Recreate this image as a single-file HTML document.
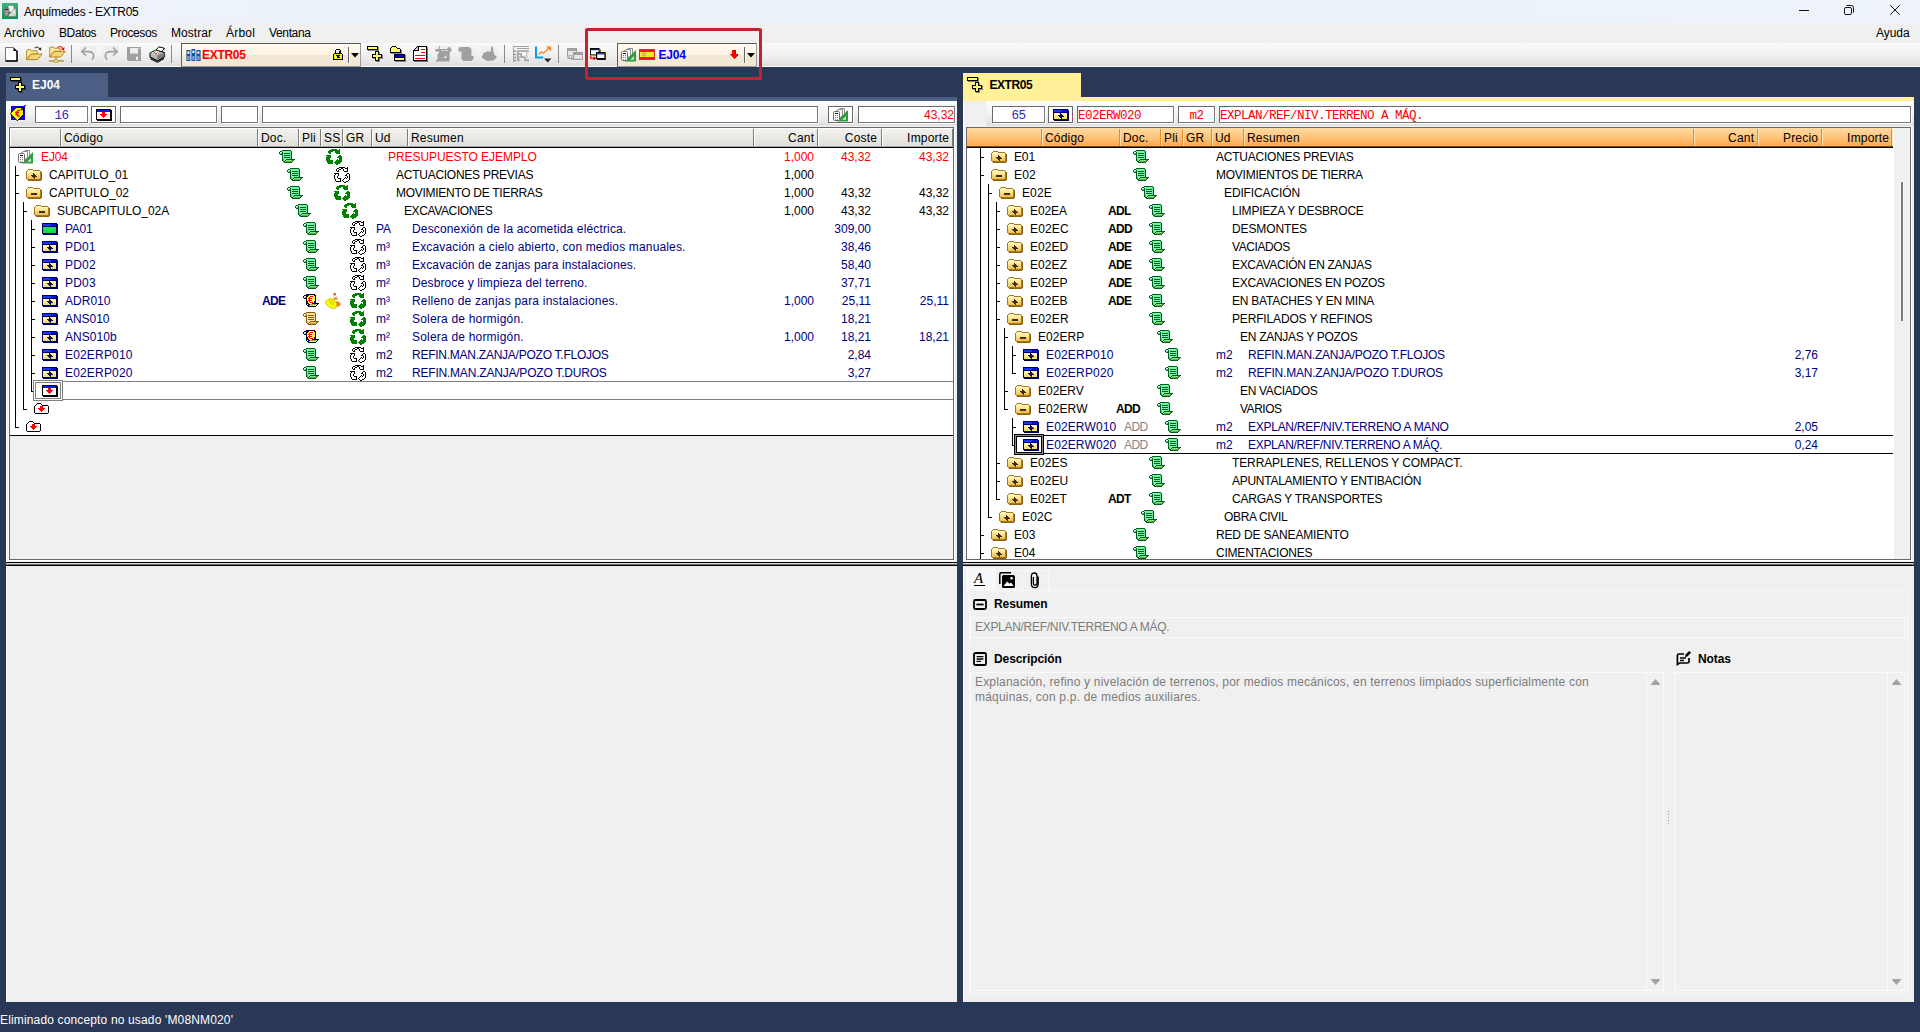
<!DOCTYPE html><html lang="es"><head><meta charset="utf-8"><title>Arquímedes - EXTR05</title><style>
*{margin:0;padding:0;box-sizing:border-box}
html,body{width:1920px;height:1032px;overflow:hidden;background:#2a3857}
body{position:relative;font-family:"Liberation Sans",Arial,sans-serif;font-size:12px;color:#000}
div,span,svg.ic{position:absolute}
svg.ic{display:block;overflow:visible}
.t{white-space:nowrap;line-height:18px;height:18px;font-size:12px}
.b{font-weight:bold}

.red{color:#ff0000}.nv{color:#000080}.gy{color:#858585}
.mono{font-family:"Liberation Mono","DejaVu Sans Mono",monospace;font-size:12.6px;letter-spacing:-0.56px;margin-top:1px}
.inp{background:#fff;border:1px solid #6a6a6a;border-right-color:#7a7a7a;border-bottom-color:#7a7a7a;box-shadow:1px 1px 0 #fdfdfd}
.btn{background:#fff;border:1px solid #6a6a6a;box-shadow:1px 1px 0 #fdfdfd}
.hl{background:linear-gradient(#f2f1ed,#e9e8e3 55%,#dfded8)}
.hr{background:linear-gradient(#ffdca4,#ffc57c 50%,#ffa850)}
.sepl{width:1px;background:#7b7b7b;box-shadow:1px 0 0 #fff}
.sepr{width:1px;background:#e08c30;box-shadow:1px 0 0 #ffe2b4}
.vl{width:1px;background:#000}
.hlin{height:1px;background:#000}
.tsep{width:1px;background:#8a8a8a}
.combo{border:1px solid #5c5c5c;border-right-color:#9a9a9a;border-bottom-color:#9a9a9a;background:linear-gradient(#fffaf0,#fdf3e3 50%,#f2e6d2 52%,#f3e9d8)}
</style></head><body><svg width="0" height="0" style="position:absolute"><defs><symbol id="scg" viewBox="0 0 16 13" shape-rendering="crispEdges"><path fill="#005a22" d="M3 0h9v1h-9zM1 1h2v1h-2zM12 1h1v1h-1zM0 2h1v1h-1zM3 2h1v1h-1zM12 2h1v1h-1zM0 3h1v1h-1zM3 3h1v1h-1zM5 3h6v1h-6zM12 3h1v1h-1zM1 4h3v1h-3zM12 4h1v1h-1zM3 5h1v1h-1zM5 5h6v1h-6zM12 5h1v1h-1zM3 6h1v1h-1zM12 6h1v1h-1zM3 7h1v1h-1zM5 7h6v1h-6zM12 7h1v1h-1zM3 8h1v1h-1zM12 8h1v1h-1zM3 9h1v1h-1zM7 9h9v1h-9zM3 10h1v1h-1zM6 10h1v1h-1zM14 10h1v1h-1zM4 11h2v1h-2zM13 11h1v1h-1zM5 12h8v1h-8z"/><path fill="#74f8a0" d="M3 1h8v1h-8zM4 2h7v1h-7zM1 3h1v1h-1zM4 3h1v1h-1zM4 4h7v1h-7zM4 5h1v1h-1zM4 6h7v1h-7zM4 7h1v1h-1zM4 8h7v1h-7zM5 9h2v1h-2zM5 10h1v1h-1z"/><path fill="#58e888" d="M11 1h1v1h-1zM11 2h1v1h-1zM11 3h1v1h-1zM11 4h1v1h-1zM11 5h1v1h-1zM11 6h1v1h-1zM11 7h1v1h-1zM11 8h1v1h-1z"/><path fill="#d0ffe4" d="M1 2h2v1h-2z"/><path fill="#34c468" d="M2 3h1v1h-1zM4 9h1v1h-1zM4 10h1v1h-1z"/><path fill="#94dc80" d="M7 10h6v1h-6zM6 11h1v1h-1z"/><path fill="#58b444" d="M13 10h1v1h-1zM7 11h6v1h-6z"/></symbol><symbol id="sct" viewBox="0 0 16 13" shape-rendering="crispEdges"><path fill="#8a5a0c" d="M3 0h9v1h-9zM1 1h2v1h-2zM12 1h1v1h-1zM0 2h1v1h-1zM3 2h1v1h-1zM12 2h1v1h-1zM0 3h1v1h-1zM3 3h1v1h-1zM5 3h6v1h-6zM12 3h1v1h-1zM1 4h3v1h-3zM12 4h1v1h-1zM3 5h1v1h-1zM5 5h6v1h-6zM12 5h1v1h-1zM3 6h1v1h-1zM12 6h1v1h-1zM3 7h1v1h-1zM5 7h6v1h-6zM12 7h1v1h-1zM3 8h1v1h-1zM12 8h1v1h-1zM3 9h1v1h-1zM7 9h9v1h-9zM3 10h1v1h-1zM6 10h1v1h-1zM14 10h1v1h-1zM4 11h2v1h-2zM13 11h1v1h-1zM5 12h8v1h-8z"/><path fill="#fbe7a4" d="M3 1h8v1h-8zM4 2h7v1h-7zM1 3h1v1h-1zM4 3h1v1h-1zM4 4h7v1h-7zM4 5h1v1h-1zM4 6h7v1h-7zM4 7h1v1h-1zM4 8h7v1h-7zM5 9h2v1h-2zM5 10h1v1h-1z"/><path fill="#f0d585" d="M11 1h1v1h-1zM11 2h1v1h-1zM11 3h1v1h-1zM11 4h1v1h-1zM11 5h1v1h-1zM11 6h1v1h-1zM11 7h1v1h-1zM11 8h1v1h-1z"/><path fill="#fff8d8" d="M1 2h2v1h-2z"/><path fill="#e0bc60" d="M2 3h1v1h-1zM4 9h1v1h-1zM4 10h1v1h-1z"/><path fill="#e8cc78" d="M7 10h6v1h-6zM6 11h1v1h-1z"/><path fill="#c8a048" d="M13 10h1v1h-1zM7 11h6v1h-6z"/></symbol><symbol id="sce" viewBox="0 0 16 13" shape-rendering="crispEdges"><path fill="#000000" d="M3 0h9v1h-9zM1 1h2v1h-2zM12 1h1v1h-1zM0 2h1v1h-1zM3 2h1v1h-1zM12 2h1v1h-1zM0 3h1v1h-1zM3 3h1v1h-1zM12 3h1v1h-1zM1 4h3v1h-3zM12 4h1v1h-1zM3 5h1v1h-1zM12 5h1v1h-1zM3 6h1v1h-1zM12 6h1v1h-1zM3 7h1v1h-1zM12 7h1v1h-1zM3 8h1v1h-1zM12 8h1v1h-1zM3 9h1v1h-1zM9 9h7v1h-7zM3 10h1v1h-1zM6 10h1v1h-1zM14 10h1v1h-1zM4 11h2v1h-2zM13 11h1v1h-1zM5 12h8v1h-8z"/><path fill="#0000c8" d="M3 1h3v1h-3zM11 1h1v1h-1zM4 2h1v1h-1zM4 7h1v1h-1zM11 7h1v1h-1zM4 8h1v1h-1zM11 8h1v1h-1zM4 9h2v1h-2zM5 10h1v1h-1z"/><path fill="#ffff40" d="M6 1h5v1h-5zM5 2h2v1h-2zM10 2h2v1h-2zM4 3h2v1h-2zM7 3h5v1h-5zM4 4h1v1h-1zM9 4h3v1h-3zM4 5h2v1h-2zM7 5h5v1h-5zM4 6h1v1h-1zM9 6h3v1h-3zM5 7h1v1h-1zM7 7h4v1h-4zM5 8h2v1h-2zM10 8h1v1h-1zM6 9h3v1h-3z"/><path fill="#e0e0e0" d="M1 2h2v1h-2zM1 3h1v1h-1zM4 10h1v1h-1z"/><path fill="#ff0000" d="M7 2h3v1h-3zM6 3h1v1h-1zM5 4h4v1h-4zM6 5h1v1h-1zM5 6h4v1h-4zM6 7h1v1h-1zM7 8h3v1h-3z"/><path fill="#a0a0a0" d="M2 3h1v1h-1z"/><path fill="#b8b020" d="M7 10h6v1h-6zM6 11h1v1h-1z"/><path fill="#d8d8c0" d="M13 10h1v1h-1zM7 11h6v1h-6z"/></symbol><symbol id="rcg" viewBox="0 0 16 16" shape-rendering="crispEdges"><path fill="#008000" d="M5 0h6v1h-6zM13 0h1v1h-1zM3 1h11v1h-11zM2 2h5v1h-5zM9 2h5v1h-5zM2 3h3v1h-3zM9 3h5v1h-5zM3 4h2v1h-2zM10 4h4v1h-4zM0 6h5v1h-5zM13 6h2v1h-2zM1 7h4v1h-4zM12 7h4v1h-4zM0 8h5v1h-5zM11 8h5v1h-5zM0 9h4v1h-4zM13 9h3v1h-3zM0 10h4v1h-4zM11 10h1v1h-1zM13 10h3v1h-3zM0 11h7v1h-7zM10 11h6v1h-6zM1 12h6v1h-6zM9 12h7v1h-7zM1 13h6v1h-6zM8 13h7v1h-7zM2 14h5v1h-5zM9 14h5v1h-5zM10 15h2v1h-2z"/></symbol><symbol id="rco" viewBox="0 0 16 16" shape-rendering="crispEdges"><path fill="#000000" d="M5 0h6v1h-6zM13 0h1v1h-1zM3 1h2v1h-2zM7 1h2v1h-2zM11 1h3v1h-3zM2 2h1v1h-1zM5 2h2v1h-2zM9 2h1v1h-1zM13 2h1v1h-1zM2 3h1v1h-1zM4 3h1v1h-1zM9 3h1v1h-1zM13 3h1v1h-1zM3 4h2v1h-2zM10 4h4v1h-4zM0 6h5v1h-5zM13 6h2v1h-2zM1 7h1v1h-1zM4 7h1v1h-1zM12 7h1v1h-1zM15 7h1v1h-1zM0 8h1v1h-1zM4 8h1v1h-1zM11 8h2v1h-2zM15 8h1v1h-1zM0 9h1v1h-1zM3 9h1v1h-1zM13 9h1v1h-1zM15 9h1v1h-1zM0 10h1v1h-1zM3 10h1v1h-1zM11 10h1v1h-1zM13 10h1v1h-1zM15 10h1v1h-1zM0 11h1v1h-1zM4 11h3v1h-3zM10 11h1v1h-1zM12 11h1v1h-1zM15 11h1v1h-1zM1 12h1v1h-1zM6 12h1v1h-1zM9 12h1v1h-1zM15 12h1v1h-1zM1 13h1v1h-1zM6 13h1v1h-1zM8 13h1v1h-1zM14 13h1v1h-1zM2 14h5v1h-5zM9 14h1v1h-1zM12 14h2v1h-2zM10 15h2v1h-2z"/><path fill="#ffffff" d="M5 1h2v1h-2zM9 1h2v1h-2zM3 2h2v1h-2zM10 2h3v1h-3zM3 3h1v1h-1zM10 3h3v1h-3zM2 7h2v1h-2zM13 7h2v1h-2zM1 8h3v1h-3zM13 8h2v1h-2zM1 9h2v1h-2zM14 9h1v1h-1zM1 10h2v1h-2zM14 10h1v1h-1zM1 11h3v1h-3zM11 11h1v1h-1zM13 11h2v1h-2zM2 12h4v1h-4zM10 12h5v1h-5zM2 13h4v1h-4zM9 13h5v1h-5zM10 14h2v1h-2z"/></symbol><symbol id="fplus" viewBox="0 0 16 12" shape-rendering="crispEdges"><path fill="#a87818" d="M2 0h5v1h-5zM1 1h1v1h-1zM7 1h7v1h-7zM0 2h1v1h-1zM14 2h1v1h-1zM0 3h1v1h-1zM14 3h1v1h-1zM0 4h1v1h-1zM14 4h1v1h-1zM0 5h1v1h-1zM14 5h1v1h-1zM0 6h1v1h-1zM14 6h1v1h-1zM0 7h1v1h-1zM14 7h1v1h-1zM0 8h1v1h-1zM14 8h1v1h-1zM0 9h1v1h-1zM14 9h1v1h-1zM1 10h14v1h-14z"/><path fill="#fff6c0" d="M2 1h5v1h-5zM1 2h13v1h-13z"/><path fill="#fdeca0" d="M1 3h13v1h-13zM1 4h6v1h-6zM8 4h6v1h-6z"/><path fill="#8c600c" d="M15 3h1v1h-1zM15 4h1v1h-1zM15 5h1v1h-1zM15 6h1v1h-1zM15 7h1v1h-1zM15 8h1v1h-1zM15 9h1v1h-1zM15 10h1v1h-1zM2 11h13v1h-13z"/><path fill="#4a2c04" d="M7 4h1v1h-1zM7 5h2v1h-2zM5 6h5v1h-5zM6 7h5v1h-5zM7 8h2v1h-2zM8 9h1v1h-1z"/><path fill="#f7de88" d="M1 5h6v1h-6zM9 5h5v1h-5zM1 6h4v1h-4zM10 6h4v1h-4z"/><path fill="#efcf6c" d="M1 7h5v1h-5zM11 7h3v1h-3zM1 8h6v1h-6zM9 8h5v1h-5z"/><path fill="#e6c058" d="M1 9h7v1h-7zM9 9h5v1h-5z"/></symbol><symbol id="fminus" viewBox="0 0 16 12" shape-rendering="crispEdges"><path fill="#a87818" d="M2 0h5v1h-5zM1 1h1v1h-1zM7 1h7v1h-7zM0 2h1v1h-1zM14 2h1v1h-1zM0 3h1v1h-1zM14 3h1v1h-1zM0 4h1v1h-1zM14 4h1v1h-1zM0 5h1v1h-1zM14 5h1v1h-1zM0 6h1v1h-1zM14 6h1v1h-1zM0 7h1v1h-1zM14 7h1v1h-1zM0 8h1v1h-1zM14 8h1v1h-1zM0 9h1v1h-1zM14 9h1v1h-1zM1 10h14v1h-14z"/><path fill="#fff6c0" d="M2 1h5v1h-5zM1 2h13v1h-13z"/><path fill="#fdeca0" d="M1 3h13v1h-13zM1 4h13v1h-13z"/><path fill="#8c600c" d="M15 3h1v1h-1zM15 4h1v1h-1zM15 5h1v1h-1zM15 6h1v1h-1zM15 7h1v1h-1zM15 8h1v1h-1zM15 9h1v1h-1zM15 10h1v1h-1zM2 11h13v1h-13z"/><path fill="#f7de88" d="M1 5h13v1h-13zM1 6h4v1h-4zM11 6h3v1h-3z"/><path fill="#4a2c04" d="M5 6h6v1h-6zM5 7h6v1h-6z"/><path fill="#efcf6c" d="M1 7h4v1h-4zM11 7h3v1h-3zM1 8h13v1h-13z"/><path fill="#e6c058" d="M1 9h13v1h-13z"/></symbol><symbol id="item" viewBox="0 0 16 12" shape-rendering="crispEdges"><path fill="#000064" d="M0 0h15v1h-15zM0 1h1v1h-1zM14 1h2v1h-2zM0 2h1v1h-1zM14 2h2v1h-2zM0 3h16v1h-16zM0 4h1v1h-1zM14 4h2v1h-2zM0 5h1v1h-1zM14 5h2v1h-2zM0 6h1v1h-1zM14 6h2v1h-2zM0 7h1v1h-1zM14 7h2v1h-2zM0 8h1v1h-1zM14 8h2v1h-2zM0 9h1v1h-1zM14 9h2v1h-2zM0 10h16v1h-16zM1 11h15v1h-15z"/><path fill="#1838ff" d="M1 1h8v1h-8zM1 2h8v1h-8z"/><path fill="#0010f0" d="M9 1h5v1h-5zM9 2h5v1h-5z"/><path fill="#fff2a8" d="M1 4h6v1h-6zM8 4h6v1h-6zM1 5h6v1h-6zM9 5h5v1h-5z"/><path fill="#101048" d="M7 4h1v1h-1zM7 5h2v1h-2zM5 6h5v1h-5zM6 7h5v1h-5zM7 8h2v1h-2zM8 9h1v1h-1z"/><path fill="#fde78c" d="M1 6h4v1h-4zM10 6h4v1h-4zM1 7h5v1h-5zM11 7h3v1h-3z"/><path fill="#f6da74" d="M1 8h6v1h-6zM9 8h5v1h-5zM1 9h7v1h-7zM9 9h5v1h-5z"/></symbol><symbol id="itemg" viewBox="0 0 16 12" shape-rendering="crispEdges"><path fill="#000064" d="M0 0h15v1h-15zM0 1h1v1h-1zM14 1h2v1h-2zM0 2h1v1h-1zM14 2h2v1h-2zM0 3h16v1h-16zM0 4h1v1h-1zM14 4h2v1h-2zM0 5h1v1h-1zM14 5h2v1h-2zM0 6h1v1h-1zM14 6h2v1h-2zM0 7h1v1h-1zM14 7h2v1h-2zM0 8h1v1h-1zM14 8h2v1h-2zM0 9h1v1h-1zM14 9h2v1h-2zM0 10h16v1h-16zM1 11h15v1h-15z"/><path fill="#1838ff" d="M1 1h8v1h-8zM1 2h8v1h-8z"/><path fill="#0010f0" d="M9 1h5v1h-5zM9 2h5v1h-5z"/><path fill="#18e458" d="M1 4h13v1h-13zM1 5h13v1h-13zM5 6h5v1h-5zM6 7h5v1h-5zM7 8h2v1h-2zM8 9h1v1h-1z"/><path fill="#10e050" d="M1 6h4v1h-4zM10 6h4v1h-4zM1 7h5v1h-5zM11 7h3v1h-3z"/><path fill="#08dc48" d="M1 8h6v1h-6zM9 8h5v1h-5zM1 9h7v1h-7zM9 9h5v1h-5z"/></symbol><symbol id="newitem" viewBox="0 0 16 12" shape-rendering="crispEdges"><path fill="#000000" d="M0 0h15v1h-15zM0 1h1v1h-1zM14 1h2v1h-2zM0 2h1v1h-1zM14 2h2v1h-2zM0 3h1v1h-1zM14 3h2v1h-2zM0 4h1v1h-1zM14 4h2v1h-2zM0 5h1v1h-1zM14 5h2v1h-2zM0 6h1v1h-1zM14 6h2v1h-2zM0 7h1v1h-1zM14 7h2v1h-2zM0 8h1v1h-1zM14 8h2v1h-2zM0 9h1v1h-1zM14 9h2v1h-2zM0 10h16v1h-16zM1 11h15v1h-15z"/><path fill="#0020f0" d="M1 1h13v1h-13zM1 2h13v1h-13z"/><path fill="#ffffff" d="M1 3h5v1h-5zM9 3h5v1h-5zM1 4h5v1h-5zM9 4h5v1h-5zM1 5h3v1h-3zM11 5h3v1h-3zM1 6h4v1h-4zM10 6h4v1h-4zM1 7h5v1h-5zM9 7h5v1h-5zM1 8h6v1h-6zM8 8h6v1h-6zM1 9h13v1h-13z"/><path fill="#ff0000" d="M6 3h3v1h-3zM6 4h3v1h-3zM4 5h7v1h-7zM5 6h5v1h-5zM6 7h3v1h-3zM7 8h1v1h-1z"/></symbol><symbol id="newfolder" viewBox="0 0 15 11" shape-rendering="crispEdges"><path fill="#000000" d="M3 0h4v1h-4zM2 1h1v1h-1zM7 1h1v1h-1zM1 2h1v1h-1zM8 2h6v1h-6zM0 3h1v1h-1zM14 3h1v1h-1zM0 4h1v1h-1zM14 4h1v1h-1zM0 5h1v1h-1zM14 5h1v1h-1zM0 6h1v1h-1zM14 6h1v1h-1zM0 7h1v1h-1zM14 7h1v1h-1zM0 8h1v1h-1zM14 8h1v1h-1zM0 9h1v1h-1zM14 9h1v1h-1zM1 10h13v1h-13z"/><path fill="#ffffff" d="M3 1h4v1h-4zM2 2h6v1h-6zM1 3h5v1h-5zM9 3h5v1h-5zM1 4h5v1h-5zM9 4h5v1h-5zM1 5h3v1h-3zM11 5h3v1h-3zM1 6h4v1h-4zM10 6h4v1h-4zM1 7h5v1h-5zM9 7h5v1h-5zM1 8h6v1h-6zM8 8h6v1h-6zM1 9h13v1h-13z"/><path fill="#ff0000" d="M6 3h3v1h-3zM6 4h3v1h-3zM4 5h7v1h-7zM5 6h5v1h-5zM6 7h3v1h-3zM7 8h1v1h-1z"/></symbol><symbol id="budget" viewBox="0 0 16 14"><path d="M5.5 3.5 L5.5 1.5 L8 .5 L11.5 .5 L11.5 8" fill="#fff" stroke="#8a8a8a"/><path d="M3.5 4 L3.5 2.5 L6 1.5 L9.5 1.5 L9.5 9 L3.5 9Z" fill="#fff" stroke="#8a8a8a"/><polygon points="15,2 15,13.5 3.5,13.5" fill="#2e9c3c"/><polygon points="13,8 13,11.7 9.2,11.7" fill="#cfe8d0"/><rect x=".5" y="3.5" width="6" height="9" rx="1" fill="#fff" stroke="#6e6e6e"/><rect x="2" y="5" width="3" height="1" fill="#111"/><rect x="2" y="7" width="1" height="1" fill="#777"/><rect x="4" y="7" width="1" height="1" fill="#777"/><rect x="2" y="9" width="1" height="1" fill="#777"/><rect x="4" y="9" width="1" height="1" fill="#777"/><rect x="2" y="11" width="1" height="1" fill="#999"/><rect x="4" y="11" width="1" height="1" fill="#999"/></symbol><symbol id="hat" viewBox="0 0 16 16"><path d="M8.6 .2 H10.4 L14.2 9.8 L16 11 L13 13.9 L9 10 Z" fill="#ff7208"/><path d="M8.6 .2 H10.4 L10.8 1.4 H8.6Z" fill="#a84808"/><path d="M8.7 2.6 H11.4 L12.1 4.4 H8.8Z M8.9 6.6 H13 L13.8 8.6 H9Z" fill="#fff"/><path d="M.4 10.8 C.4 7 4 4.8 7.6 6 C10.6 7 12 10 11.8 12.6 L10.8 15 C8 16.6 4 14.4 .4 10.8Z" fill="#ffff00" stroke="#b0b000" stroke-width=".7"/><path d="M3.4 7.2 C5.2 8 6.2 9.6 6.4 11.8 M6 6.2 C7.6 7.2 8.8 9.4 8.8 12.8" stroke="#b8b800" stroke-width=".9" fill="none"/></symbol><symbol id="tbtree" viewBox="0 0 16 16" shape-rendering="crispEdges"><path fill="#000000" d="M0 0h11v1h-11zM0 1h1v1h-1zM10 1h1v1h-1zM0 2h1v1h-1zM10 2h1v1h-1zM0 3h11v1h-11zM8 5h4v1h-4zM8 6h1v1h-1zM11 6h1v1h-1zM8 7h1v1h-1zM11 7h1v1h-1zM5 8h4v1h-4zM11 8h4v1h-4zM5 9h1v1h-1zM14 9h1v1h-1zM5 10h1v1h-1zM14 10h1v1h-1zM5 11h4v1h-4zM11 11h4v1h-4zM8 12h1v1h-1zM11 12h1v1h-1zM8 13h1v1h-1zM11 13h1v1h-1zM8 14h4v1h-4z"/><path fill="#ffff60" d="M1 1h9v1h-9zM1 2h9v1h-9zM9 6h2v1h-2zM9 7h2v1h-2zM9 8h2v1h-2zM6 9h8v1h-8zM6 10h8v1h-8zM9 11h2v1h-2zM9 12h2v1h-2zM9 13h2v1h-2z"/><path fill="#00000070" d="M11 1h1v1h-1zM11 2h1v1h-1zM11 3h1v1h-1zM1 4h11v1h-11zM12 6h1v1h-1zM12 7h1v1h-1zM15 9h1v1h-1zM15 10h1v1h-1zM15 11h1v1h-1zM6 12h2v1h-2zM12 12h4v1h-4zM12 13h1v1h-1zM12 14h1v1h-1zM9 15h4v1h-4z"/></symbol><symbol id="tbfold" viewBox="0 0 16 16" shape-rendering="crispEdges"><path fill="#000000" d="M2 0h4v1h-4zM1 1h1v1h-1zM6 1h1v1h-1zM0 2h1v1h-1zM7 2h3v1h-3zM0 3h1v1h-1zM10 3h1v1h-1zM0 4h1v1h-1zM10 4h1v1h-1zM0 5h1v1h-1zM10 5h1v1h-1zM0 6h11v1h-11zM4 8h11v1h-11zM4 9h1v1h-1zM14 9h1v1h-1zM4 10h1v1h-1zM14 10h1v1h-1zM4 11h11v1h-11zM4 12h1v1h-1zM14 12h1v1h-1zM4 13h1v1h-1zM14 13h1v1h-1zM4 14h11v1h-11z"/><path fill="#ffff60" d="M2 1h4v1h-4zM1 2h6v1h-6zM1 3h9v1h-9zM1 4h9v1h-9zM1 5h9v1h-9zM5 12h9v1h-9zM5 13h9v1h-9z"/><path fill="#00000070" d="M11 4h1v1h-1zM11 5h1v1h-1zM11 6h1v1h-1zM1 7h11v1h-11zM15 9h1v1h-1zM15 10h1v1h-1zM15 11h1v1h-1zM15 12h1v1h-1zM15 13h1v1h-1zM15 14h1v1h-1zM5 15h11v1h-11z"/><path fill="#0000f0" d="M5 9h9v1h-9zM5 10h9v1h-9z"/></symbol><symbol id="tbdoc" viewBox="0 0 16 16" shape-rendering="crispEdges"><path fill="#000000" d="M4 0h10v1h-10zM3 1h1v1h-1zM5 1h1v1h-1zM13 1h1v1h-1zM2 2h1v1h-1zM5 2h1v1h-1zM13 2h1v1h-1zM1 3h1v1h-1zM5 3h1v1h-1zM13 3h1v1h-1zM0 4h6v1h-6zM13 4h1v1h-1zM0 5h1v1h-1zM13 5h1v1h-1zM0 6h1v1h-1zM13 6h1v1h-1zM0 7h1v1h-1zM13 7h1v1h-1zM0 8h1v1h-1zM13 8h1v1h-1zM0 9h1v1h-1zM13 9h1v1h-1zM0 10h1v1h-1zM13 10h1v1h-1zM0 11h1v1h-1zM13 11h1v1h-1zM0 12h1v1h-1zM13 12h1v1h-1zM0 13h1v1h-1zM13 13h1v1h-1zM0 14h14v1h-14z"/><path fill="#c8c8c8" d="M4 1h1v1h-1zM3 2h2v1h-2zM2 3h3v1h-3z"/><path fill="#ffffff" d="M6 1h7v1h-7zM6 2h7v1h-7zM6 3h2v1h-2zM12 3h1v1h-1zM6 4h7v1h-7zM1 5h12v1h-12zM1 6h7v1h-7zM12 6h1v1h-1zM1 7h12v1h-12zM1 8h12v1h-12zM1 9h1v1h-1zM12 9h1v1h-1zM1 10h12v1h-12zM1 11h12v1h-12zM1 12h1v1h-1zM12 12h1v1h-1zM1 13h12v1h-12z"/><path fill="#00000080" d="M14 1h1v1h-1zM14 2h1v1h-1zM14 3h1v1h-1zM14 4h1v1h-1zM14 5h1v1h-1zM14 6h1v1h-1zM14 7h1v1h-1zM14 8h1v1h-1zM14 9h1v1h-1zM14 10h1v1h-1zM14 11h1v1h-1zM14 12h1v1h-1zM14 13h1v1h-1zM14 14h1v1h-1zM1 15h14v1h-14z"/><path fill="#ff0000" d="M8 3h4v1h-4zM8 6h4v1h-4zM2 9h10v1h-10zM2 12h10v1h-10z"/></symbol><symbol id="tbnew" viewBox="0 0 13 15"><path d="M.5 .5 H8.5 L12 4 V14 H.5Z" fill="#fff" stroke="#777"/><path d="M8.5 .5 L12 4 H8.5Z" fill="#000"/><path d="M12 3.5 V14 H.5" fill="none" stroke="#000" stroke-width="1.4"/></symbol><symbol id="tbopen" viewBox="0 0 17 15"><path d="M.7 4.5 Q.7 3.6 1.6 3.6 H4.4 L5.4 4.8 H10.4 Q11.2 4.8 11.2 5.6 V8 H5 L.7 13.5Z" fill="#fbe9a6" stroke="#b07c10" stroke-width=".9"/><path d="M.8 13.6 L5.2 8 H16.2 L11.6 13.6Z" fill="#f5d676" stroke="#b07c10" stroke-width=".9"/><path d="M8.6 2 Q11.2 -.4 13.8 2.6" fill="none" stroke="#3a2606" stroke-width="1"/><path d="M12.2 3.6 L15.2 1.2 L15.2 4.4Z" fill="#3a2606"/></symbol><symbol id="tbnet" viewBox="0 0 17 17"><g transform="translate(0,-2.6)"><path d="M.7 4.5 Q.7 3.6 1.6 3.6 H4.4 L5.4 4.8 H10.4 Q11.2 4.8 11.2 5.6 V8 H5 L.7 13.5Z" fill="#fbe9a6" stroke="#b07c10" stroke-width=".9"/><path d="M.8 13.6 L5.2 8 H16.2 L11.6 13.6Z" fill="#f5d676" stroke="#b07c10" stroke-width=".9"/></g><path d="M8.4 1.6 Q11.4 -.8 13.6 2.2" fill="none" stroke="#ff2020" stroke-width="1.1"/><path d="M11.8 3 L15.6 1.2 L15 4.8Z" fill="#ff0000"/><path d="M7 11 V14" stroke="#b07c10" stroke-width="1"/><path d="M0 15 H15" stroke="#a87410" stroke-width="1.1"/><rect x="5.2" y="13.6" width="3.6" height="2.8" rx=".8" fill="#e8f0a0" stroke="#a09010" stroke-width=".8"/></symbol><symbol id="tbundo" viewBox="0 0 16 16"><rect width="16" height="16" fill="#ececec" opacity=".7"/><path d="M6 .6 L.6 5.6 L6 10.6 L6 8.4 L2.8 5.6 L6 2.8Z" fill="#a0a0a0"/><path d="M2.4 5.6 H9 Q14 6 13.6 10.6 Q13.4 12.8 11.6 13.8" fill="none" stroke="#a0a0a0" stroke-width="1.6"/></symbol><symbol id="tbredo" viewBox="0 0 16 16"><rect width="16" height="16" fill="#ececec" opacity=".7"/><g transform="translate(16,0) scale(-1,1)"><path d="M6 .6 L.6 5.6 L6 10.6 L6 8.4 L2.8 5.6 L6 2.8Z" fill="#a0a0a0"/><path d="M2.4 5.6 H9 Q14 6 13.6 10.6 Q13.4 12.8 11.6 13.8" fill="none" stroke="#a0a0a0" stroke-width="1.6"/></g></symbol><symbol id="tbsave" viewBox="0 0 14 14"><path d="M0 0 H14 V14 H1.4 L0 12.6Z" fill="#a0a0a0"/><rect x="3" y="1" width="8" height="5.6" fill="#eee"/><rect x="9" y="9.6" width="2" height="3.4" fill="#eee"/><rect x="12.2" y="1" width="1" height="1" fill="#eee"/></symbol><symbol id="tbprint" viewBox="0 0 17 17"><path d="M6.6 4.4 L10 .8 L15.6 2.4 L12 6.4Z" fill="#fff" stroke="#000" stroke-width="1"/><path d="M1 7 L7 4 L15.6 6.6 L15.6 10.6 L8.6 14.8 L1 11Z" fill="#b8b8b8" stroke="#000" stroke-width="1"/><path d="M8 9.4 L15.4 6.8 V10.6 L8.4 14.6Z" fill="#7c7c7c"/><path d="M1.4 7.2 L7 4.4 L10 5.4 L8 9.2 Z" fill="#e0e0e0"/><path d="M1 11.4 L8.6 15.2 L15.6 11 M1.6 13 L8.6 16.4 L15 12.6" fill="none" stroke="#000" stroke-width="1"/><rect x="4" y="6.2" width="2" height="1.2" fill="#10d020"/><rect x="6.2" y="7.2" width="2" height="1.2" fill="#ff1010"/></symbol><symbol id="tbg1" viewBox="0 0 17 16"><rect width="17" height="16" fill="#ececec" opacity=".6"/><path d="M4 0 H5 V3 H12 L14.4 .6 L16.4 3 V5.4 H14.8 L14.6 15.6 H.4 L3.4 11.4 H2.4 V8.6 L4 7 V5.4 H.4 V3 H4Z" fill="#a0a0a0"/><path d="M11.4 9 V12 H8.6Z" fill="#ececec"/><rect x="6.6" y="4" width="2" height=".9" fill="#ececec"/><rect x="10" y="4" width="2.6" height=".9" fill="#ececec"/></symbol><symbol id="tbg2" viewBox="0 0 17 16"><rect width="17" height="16" fill="#ececec" opacity=".6"/><path d="M2 1 H11 L13.4 3 V10 H15.6 V12.6 L13.6 15 H5.4 L3.4 13 V5.4 H.4 V2.6Z" fill="#a0a0a0"/></symbol><symbol id="tbg3" viewBox="0 0 17 16"><rect width="17" height="16" fill="#ececec" opacity=".6"/><path d="M10.6 .4 H11.6 L12 3 L13.4 9 L16 10.6 L13 14.6 L6 15 L.6 11.4 L2.6 7 L6 5.4 H10 L9.8 2Z" fill="#a0a0a0"/></symbol><symbol id="tbgtree" viewBox="0 0 16 16"><g fill="none" stroke="#a0a0a0"><path d="M.5 16 V.5 H16" stroke-width="1"/><path d="M4 2.5 H16" stroke-width="1"/><path d="M5 15 V5 H16 M5.5 8 H9 M8 8 V11 H12 M12 11 V14.4 H16" stroke-width="1.6"/></g><g fill="#a0a0a0"><rect x="1" y="4.4" width="2.4" height="1.6"/><rect x="1" y="7.6" width="2.4" height="1.6"/><rect x="1" y="10.8" width="2.4" height="1.6"/><rect x="1" y="13.8" width="2.4" height="1.6"/></g><path d="M13 6 L14.5 7.5 L13 9 L14.5 10.5 L13 12 M5.6 10 L7 11.4 L5.6 12.8 L7 14.2 L5.6 15.6" fill="none" stroke="#a0a0a0" stroke-width=".8"/></symbol><symbol id="tbchart" viewBox="0 0 17 17"><path d="M1 .4 V11.4 H8.2" fill="none" stroke="#0c9ce8" stroke-width="2"/><path d="M3.6 8.4 L6.4 5.8 L8.2 7.2 L14 2" fill="none" stroke="#ff8224" stroke-width="1.3"/><path d="M11 .4 H16.2 V5.6Z" fill="#ff8224"/><path d="M9 12.6 H16.4 L12.7 16.6Z" fill="#2a2a2a"/></symbol><symbol id="tbgwin" viewBox="0 0 16 12"><rect width="16" height="12" fill="#ececec" opacity=".6"/><rect x=".5" y=".5" width="9" height="7.4" fill="#e6e6e6" stroke="#a0a0a0"/><rect x=".5" y=".5" width="9" height="2.4" fill="#a0a0a0"/><rect x="6.6" y="4.6" width="9" height="6.8" fill="#e6e6e6" stroke="#a0a0a0" stroke-width="1.2"/><rect x="6.6" y="4.6" width="9" height="2.4" fill="#a0a0a0"/><path d="M1 8.4 V10.4 H5.2 M4 9 L5.6 10.4 L4 11.8" fill="none" stroke="#a0a0a0" stroke-width="1.1"/></symbol><symbol id="tbwin" viewBox="0 0 16 12"><rect x=".5" y=".5" width="8.6" height="6.4" fill="#fff" stroke="#000"/><rect x="1" y="1" width="7.6" height="1.2" fill="#0000f0"/><rect x="9.6" y="1.6" width="1" height="6" fill="#000"/><rect x="6.6" y="4.6" width="8.4" height="6" fill="#fff" stroke="#000" stroke-width="1.2"/><rect x="7.2" y="5.2" width="7.2" height="1.2" fill="#0000f0"/><path d="M7 11.4 H16 V5.6" stroke="#000" stroke-width="1" fill="none"/><path d="M.8 8 V10.4 H4.6 M3.6 8.8 L5.4 10.4 L3.8 12" fill="none" stroke="#f00000" stroke-width="1.2"/></symbol><symbol id="books" viewBox="0 0 15 12"><rect x="-.5" y="-.5" width="16" height="13" fill="#fff" opacity=".85"/><g fill="#1450a8"><rect x=".4" y="1" width="4" height="11"/><rect x="5.4" y="0" width="4" height="12"/><rect x="10.4" y="1" width="4.2" height="11"/></g><g fill="#fff"><rect x="1.4" y="2.4" width="2" height="2.4"/><rect x="6.4" y="1.6" width="2" height="2.4"/><rect x="11.4" y="2.4" width="2" height="2.4"/><rect x="1.2" y="7.6" width="2.4" height=".9"/><rect x="6.2" y="7.6" width="2.4" height=".9"/><rect x="11.2" y="7.6" width="2.4" height=".9"/><rect x="1.2" y="9.6" width="2.4" height=".9"/><rect x="6.2" y="9.6" width="2.4" height=".9"/><rect x="11.2" y="9.6" width="2.4" height=".9"/></g></symbol><symbol id="lock" viewBox="0 0 10 11" shape-rendering="crispEdges"><path fill="#000000" d="M3 0h4v1h-4zM2 1h1v1h-1zM7 1h1v1h-1zM2 2h1v1h-1zM6 2h2v1h-2zM2 3h1v1h-1zM6 3h2v1h-2zM1 4h8v1h-8zM0 5h1v1h-1zM9 5h1v1h-1zM0 6h1v1h-1zM3 6h4v1h-4zM9 6h1v1h-1zM0 7h1v1h-1zM4 7h2v1h-2zM9 7h1v1h-1zM0 8h1v1h-1zM4 8h3v1h-3zM9 8h1v1h-1zM0 9h1v1h-1zM9 9h1v1h-1zM0 10h10v1h-10z"/><path fill="#e8e8e8" d="M3 1h4v1h-4zM3 2h1v1h-1zM3 3h1v1h-1zM2 7h2v1h-2zM2 8h1v1h-1z"/><path fill="#f4f000" d="M1 5h8v1h-8zM1 6h2v1h-2zM7 6h2v1h-2zM1 7h1v1h-1zM6 7h3v1h-3zM1 8h1v1h-1zM3 8h1v1h-1zM7 8h2v1h-2zM1 9h8v1h-8z"/></symbol><symbol id="flag" viewBox="0 0 16 11"><rect width="16" height="11" fill="#f01818"/><rect x="1" y="3" width="14" height="5" fill="#f8ec20"/><rect x="0" y="0" width="16" height="11" fill="none" stroke="#ff2a2a" stroke-width="1"/><circle cx="5" cy="5.5" r="1.5" fill="#e8e0d0" stroke="#e04020" stroke-width=".6"/></symbol><symbol id="redarr" viewBox="0 0 9 9" shape-rendering="crispEdges"><path fill="#ff0000" d="M2 0h3v1h-3zM2 1h3v1h-3zM2 2h3v1h-3zM2 3h3v1h-3zM0 4h7v1h-7zM1 5h6v1h-6zM2 6h4v1h-4zM3 7h2v1h-2z"/><path fill="#a00000" d="M5 0h1v1h-1zM5 1h1v1h-1zM5 2h1v1h-1zM5 3h1v1h-1zM7 4h1v1h-1zM7 5h1v1h-1zM6 6h1v1h-1zM5 7h1v1h-1zM4 8h1v1h-1z"/></symbol><symbol id="eurotag" viewBox="0 0 16 17"><rect x=".5" y=".5" width="15" height="15" fill="#fff" opacity=".9"/><rect x="1" y="1" width="14" height="14" fill="#1400e6"/><path d="M.2 8.6 L6.1 2.5 H13.5 V9.4 L7.3 15.8Z" fill="#ffff00" stroke="#000" stroke-width="1"/><path d="M10.6 2.4 H13.9 V6.4Z" fill="#000"/><circle cx="11.4" cy="4.7" r=".9" fill="#000" stroke="#f0a020" stroke-width=".5"/><path d="M13.4 2.4 L14.6 .6 L15.9 .3" fill="none" stroke="#000" stroke-width="1"/><path d="M9.8 5.5 Q6.8 4.9 6.8 8.4 Q6.8 11.8 9.8 11.3" fill="none" stroke="#ff0000" stroke-width="1.3"/><path d="M5 7.4 H9 M5 9.3 H8.6" stroke="#ff0000" stroke-width="1.1"/></symbol></defs></svg><div style="left:0px;top:0px;width:1920px;height:23px;background:linear-gradient(90deg,#eef3f9,#e9f3f8 40%,#eef4f9)"></div>
<svg class="ic" style="left:2px;top:3px" width="16" height="16" viewBox="0 0 16 16"><defs><linearGradient id="ag" x1="0" y1="0" x2="0" y2="1"><stop offset="0" stop-color="#3db47a"/><stop offset="1" stop-color="#089a50"/></linearGradient></defs><rect width="16" height="16" rx=".6" fill="url(#ag)"/><path d="M6 3 L8 2.4 H11 L12 4 V9 H6Z" fill="#f4f4f4" stroke="#777" stroke-width=".6"/><path d="M14 4.6 V13.6 H5Z" fill="#e9e6e6" stroke="#555" stroke-width=".5"/><path d="M12.6 8 V12.4 H8.4Z" fill="#fff"/><rect x="2.2" y="5" width="4.6" height="8" rx=".6" fill="#9a9a9a" stroke="#555" stroke-width=".6"/><rect x="3" y="6" width="3" height="1" fill="#222"/><circle cx="11.4" cy="10.6" r=".5" fill="#444"/><circle cx="10" cy="12" r=".5" fill="#444"/><circle cx="12.2" cy="12" r=".5" fill="#444"/></svg>
<span class="t" id="f1" style="left:24px;top:3px;letter-spacing:-0.336px;">Arquímedes - EXTR05</span>
<svg class="ic" style="left:1790px;top:0" width="130" height="23" viewBox="0 0 130 23" fill="none" stroke="#111" stroke-width="1"><path d="M9 10.5 H19"/><rect x="54.5" y="7.5" width="7" height="7" rx="1.4"/><path d="M56.5 5.5 H61.2 Q63.5 5.5 63.5 7.8 V12.5"/><path d="M100.3 5.3 L109.7 14.7 M109.7 5.3 L100.3 14.7"/></svg>
<div style="left:0px;top:23px;width:1920px;height:20px;background:#f0f0f0"></div>
<span class="t" id="f2" style="left:4px;top:24px;letter-spacing:0.09px;">Archivo</span>
<span class="t" id="f3" style="left:59px;top:24px;letter-spacing:-0.384px;">BDatos</span>
<span class="t" id="f4" style="left:110px;top:24px;letter-spacing:-0.404px;">Procesos</span>
<span class="t" id="f5" style="left:171px;top:24px;letter-spacing:0.05px;">Mostrar</span>
<span class="t" id="f6" style="left:226px;top:24px;letter-spacing:0.219px;">Árbol</span>
<span class="t" id="f7" style="left:269px;top:24px;letter-spacing:-0.353px;">Ventana</span>
<span class="t" id="f8" style="left:1876px;top:24px;letter-spacing:-0.047px;">Ayuda</span>
<div style="left:0px;top:43px;width:1920px;height:24px;background:linear-gradient(#f9f9f9,#f3f3f3 40%,#e6e5e5 80%,#dddbdb 95.8%,#fbfbfb 95.9%)"></div>
<svg class="ic" style="left:5px;top:47px" width="13" height="15"><use href="#tbnew"/></svg>
<svg class="ic" style="left:26px;top:46px" width="17" height="15"><use href="#tbopen"/></svg>
<svg class="ic" style="left:49px;top:46px" width="17" height="17"><use href="#tbnet"/></svg>
<svg class="ic" style="left:80px;top:46px" width="16" height="16"><use href="#tbundo"/></svg>
<svg class="ic" style="left:103px;top:46px" width="16" height="16"><use href="#tbredo"/></svg>
<svg class="ic" style="left:127px;top:47px" width="14" height="14"><use href="#tbsave"/></svg>
<svg class="ic" style="left:149px;top:46px" width="17" height="17"><use href="#tbprint"/></svg>
<svg class="ic" style="left:367px;top:46px" width="16" height="16"><use href="#tbtree"/></svg>
<svg class="ic" style="left:390px;top:46px" width="16" height="16"><use href="#tbfold"/></svg>
<svg class="ic" style="left:413px;top:46px" width="16" height="16"><use href="#tbdoc"/></svg>
<svg class="ic" style="left:435px;top:46px" width="17" height="16"><use href="#tbg1"/></svg>
<svg class="ic" style="left:458px;top:46px" width="17" height="16"><use href="#tbg2"/></svg>
<svg class="ic" style="left:481px;top:46px" width="17" height="16"><use href="#tbg3"/></svg>
<svg class="ic" style="left:513px;top:46px" width="16" height="16"><use href="#tbgtree"/></svg>
<svg class="ic" style="left:535px;top:46px" width="17" height="17"><use href="#tbchart"/></svg>
<svg class="ic" style="left:567px;top:48px" width="16" height="12"><use href="#tbgwin"/></svg>
<svg class="ic" style="left:590px;top:48px" width="16" height="12"><use href="#tbwin"/></svg>
<div class="tsep" style="left:71px;top:45px;width:1px;height:18px;"></div>
<div class="tsep" style="left:171px;top:45px;width:1px;height:18px;"></div>
<div class="tsep" style="left:504px;top:45px;width:1px;height:18px;"></div>
<div class="tsep" style="left:558px;top:45px;width:1px;height:18px;"></div>
<div class="combo" style="left:181px;top:43px;width:180px;height:24px;"></div>
<svg class="ic" style="left:186px;top:49px" width="15" height="12"><use href="#books"/></svg>
<span class="t b red" id="f9" style="left:202px;top:46px;letter-spacing:-0.284px;">EXTR05</span>
<svg class="ic" style="left:333px;top:49px" width="10" height="11"><use href="#lock"/></svg>
<div style="left:348px;top:47px;width:1px;height:16px;background:#666;box-shadow:1px 0 0 #fff"></div>
<svg class="ic" style="left:351px;top:53px" width="8" height="5" viewBox="0 0 8 5"><path d="M0 0 H8 L4 4.6Z" fill="#000"/></svg>
<div class="combo" style="left:617px;top:43px;width:140px;height:24px;"></div>
<svg class="ic" style="left:621px;top:48px" width="16" height="14"><use href="#budget"/></svg>
<svg class="ic" style="left:639px;top:49px" width="16" height="11"><use href="#flag"/></svg>
<span class="t b" id="f10" style="left:658.5px;top:46px;color:#0000ff;letter-spacing:-0.237px;">EJ04</span>
<svg class="ic" style="left:730px;top:50px" width="9" height="9"><use href="#redarr"/></svg>
<div style="left:744px;top:47px;width:1px;height:16px;background:#666;box-shadow:1px 0 0 #fff"></div>
<svg class="ic" style="left:747px;top:53px" width="8" height="5" viewBox="0 0 8 5"><path d="M0 0 H8 L4 4.6Z" fill="#000"/></svg>
<div style="left:6px;top:73px;width:102px;height:24px;background:#4b5f84"></div>
<div style="left:6px;top:97px;width:951px;height:4px;background:#4b5f84"></div>
<svg class="ic" style="left:10px;top:77px" width="16" height="16"><use href="#tbtree"/></svg>
<span class="t b" id="f11" style="left:32px;top:76px;color:#fff;letter-spacing:-0.009px;">EJ04</span>
<div style="left:963px;top:73px;width:118px;height:24px;background:#fff099"></div>
<div style="left:963px;top:97px;width:951px;height:4px;background:#fff099"></div>
<svg class="ic" style="left:967px;top:77px" width="16" height="16"><use href="#tbtree"/></svg>
<span class="t b" id="f12" style="left:989.4px;top:76px;letter-spacing:-0.411px;">EXTR05</span>
<div style="left:6px;top:101px;width:951px;height:461px;background:#f0f0f0"></div>
<div style="left:7px;top:101px;width:950px;height:25px;background:linear-gradient(#fbfbfb,#f5f5f5 45%,#e6e6e6 85%,#dfdfdf 92%,#e4e4e4)"></div>
<div style="left:6px;top:101px;width:1px;height:461px;background:#fff"></div>
<div style="left:9px;top:127px;width:945px;height:433px;border:1px solid #696969;background:#f0f0f0;box-shadow:-1px 0 0 0 #fafafa,1px 1px 0 0 #fff"></div>
<div style="left:963px;top:101px;width:951px;height:461px;background:#f0f0f0"></div>
<div style="left:986px;top:101px;width:928px;height:25px;background:linear-gradient(#fbfbfb,#f5f5f5 45%,#e6e6e6 85%,#dfdfdf 92%,#e4e4e4)"></div>
<div style="left:963px;top:101px;width:1px;height:461px;background:#fff"></div>
<div style="left:966px;top:127px;width:945px;height:433px;border:1px solid #696969;background:#f0f0f0;box-shadow:-1px 0 0 0 #fafafa,1px 1px 0 0 #fff"></div>
<svg class="ic" style="left:10px;top:105px" width="16" height="17"><use href="#eurotag"/></svg>
<div class="inp" style="left:35px;top:106px;width:53px;height:17px;"></div>
<span class="t mono" style="left:35px;top:106px;width:53px;text-align:center;color:#2a2ad0">16</span>
<div class="btn" style="left:91px;top:106px;width:25px;height:17px;"></div>
<svg class="ic" style="left:96px;top:109px" width="16" height="12"><use href="#newitem"/></svg>
<div class="inp" style="left:120px;top:106px;width:97px;height:17px;"></div>
<div class="inp" style="left:221px;top:106px;width:37px;height:17px;"></div>
<div class="inp" style="left:262px;top:106px;width:556px;height:17px;"></div>
<div class="btn" style="left:828px;top:106px;width:25px;height:17px;"></div>
<svg class="ic" style="left:833px;top:108px" width="16" height="14"><use href="#budget"/></svg>
<div class="inp" style="left:858px;top:106px;width:97px;height:17px;"></div>
<span class="t red" style="right:966px;top:106px;">43,32</span>
<div class="inp" style="left:992px;top:106px;width:53px;height:17px;"></div>
<span class="t mono" style="left:992px;top:106px;width:53px;text-align:center;color:#2a2ad0">65</span>
<div class="btn" style="left:1048px;top:106px;width:25px;height:17px;"></div>
<svg class="ic" style="left:1053px;top:109px" width="16" height="12"><use href="#item"/></svg>
<div class="inp" style="left:1077px;top:106px;width:97px;height:17px;"></div>
<span class="t mono red" style="left:1078px;top:106px">E02ERW020</span>
<div class="inp" style="left:1178px;top:106px;width:37px;height:17px;"></div>
<span class="t mono red" style="left:1178px;top:106px;width:37px;text-align:center">m2</span>
<div class="inp" style="left:1219px;top:106px;width:692px;height:17px;"></div>
<span class="t mono red" style="left:1220px;top:106px">EXPLAN/REF/NIV.TERRENO A MÁQ.</span>
<div style="left:10px;top:128px;width:943px;height:307px;background:#fff"></div>
<div class="hl" style="left:11px;top:129px;width:942px;height:17px;"></div>
<div style="left:10px;top:146px;width:943px;height:1px;background:#a6a6a6"></div>
<div style="left:10px;top:147px;width:943px;height:1px;background:#000"></div>
<div style="left:10px;top:435px;width:943px;height:1px;background:#000"></div>
<div class="sepl" style="left:60px;top:129px;width:1px;height:17px;"></div>
<div class="sepl" style="left:257px;top:129px;width:1px;height:17px;"></div>
<div class="sepl" style="left:298px;top:129px;width:1px;height:17px;"></div>
<div class="sepl" style="left:320px;top:129px;width:1px;height:17px;"></div>
<div class="sepl" style="left:342px;top:129px;width:1px;height:17px;"></div>
<div class="sepl" style="left:371px;top:129px;width:1px;height:17px;"></div>
<div class="sepl" style="left:407px;top:129px;width:1px;height:17px;"></div>
<div class="sepl" style="left:753px;top:129px;width:1px;height:17px;"></div>
<div class="sepl" style="left:817px;top:129px;width:1px;height:17px;"></div>
<div class="sepl" style="left:881px;top:129px;width:1px;height:17px;"></div>
<div style="left:952px;top:129px;width:1px;height:17px;background:#7b7b7b"></div>
<span class="t" style="left:64px;top:129px;letter-spacing:.2px;">Código</span>
<span class="t" style="left:261px;top:129px;letter-spacing:.2px;">Doc.</span>
<span class="t" style="left:302px;top:129px;letter-spacing:.2px;">Pli</span>
<span class="t" style="left:324px;top:129px;letter-spacing:.2px;">SS</span>
<span class="t" style="left:346px;top:129px;letter-spacing:.2px;">GR</span>
<span class="t" style="left:375px;top:129px;letter-spacing:.2px;">Ud</span>
<span class="t" style="left:411px;top:129px;letter-spacing:.2px;">Resumen</span>
<span class="t" style="right:1106px;top:129px;letter-spacing:.2px;margin-right:-.2px;">Cant</span>
<span class="t" style="right:1043px;top:129px;letter-spacing:.2px;margin-right:-.2px;">Coste</span>
<span class="t" style="right:971px;top:129px;letter-spacing:.2px;margin-right:-.2px;">Importe</span>
<svg class="ic" style="left:18px;top:150px" width="16" height="14"><use href="#budget"/></svg>
<span class="t red" id="f13" style="left:41px;top:148px;letter-spacing:-0.103px;">EJ04</span>
<svg class="ic" style="left:279px;top:150px" width="16" height="13"><use href="#scg"/></svg>
<svg class="ic" style="left:326px;top:149px" width="16" height="16"><use href="#rcg"/></svg>
<span class="t red" id="f14" style="left:388px;top:148px;letter-spacing:-0.058px;">PRESUPUESTO EJEMPLO</span>
<span class="t red" style="right:1106px;top:148px;">1,000</span>
<span class="t red" style="right:1049px;top:148px;">43,32</span>
<span class="t red" style="right:971px;top:148px;">43,32</span>
<svg class="ic" style="left:26px;top:169px" width="16" height="12"><use href="#fplus"/></svg>
<span class="t" id="f15" style="left:49px;top:166px;letter-spacing:-0.076px;">CAPITULO_01</span>
<svg class="ic" style="left:287px;top:168px" width="16" height="13"><use href="#scg"/></svg>
<svg class="ic" style="left:334px;top:167px" width="16" height="16"><use href="#rco"/></svg>
<span class="t" id="f16" style="left:396px;top:166px;letter-spacing:-0.258px;">ACTUACIONES PREVIAS</span>
<span class="t" style="right:1106px;top:166px;">1,000</span>
<svg class="ic" style="left:26px;top:187px" width="16" height="12"><use href="#fminus"/></svg>
<span class="t" id="f17" style="left:49px;top:184px;letter-spacing:-0.004px;">CAPITULO_02</span>
<svg class="ic" style="left:287px;top:186px" width="16" height="13"><use href="#scg"/></svg>
<svg class="ic" style="left:334px;top:185px" width="16" height="16"><use href="#rcg"/></svg>
<span class="t" id="f18" style="left:396px;top:184px;letter-spacing:-0.28px;">MOVIMIENTO DE TIERRAS</span>
<span class="t" style="right:1106px;top:184px;">1,000</span>
<span class="t" style="right:1049px;top:184px;">43,32</span>
<span class="t" style="right:971px;top:184px;">43,32</span>
<svg class="ic" style="left:34px;top:205px" width="16" height="12"><use href="#fminus"/></svg>
<span class="t" id="f19" style="left:57px;top:202px;letter-spacing:-0.032px;">SUBCAPITULO_02A</span>
<svg class="ic" style="left:295px;top:204px" width="16" height="13"><use href="#scg"/></svg>
<svg class="ic" style="left:342px;top:203px" width="16" height="16"><use href="#rcg"/></svg>
<span class="t" id="f20" style="left:404px;top:202px;letter-spacing:-0.385px;">EXCAVACIONES</span>
<span class="t" style="right:1106px;top:202px;">1,000</span>
<span class="t" style="right:1049px;top:202px;">43,32</span>
<span class="t" style="right:971px;top:202px;">43,32</span>
<svg class="ic" style="left:42px;top:223px" width="16" height="12"><use href="#itemg"/></svg>
<span class="t nv" id="f21" style="left:65px;top:220px;letter-spacing:-0.277px;">PA01</span>
<svg class="ic" style="left:303px;top:222px" width="16" height="13"><use href="#scg"/></svg>
<svg class="ic" style="left:350px;top:221px" width="16" height="16"><use href="#rco"/></svg>
<span class="t nv" style="left:376px;top:220px;">PA</span>
<span class="t nv" id="f22" style="left:412px;top:220px;letter-spacing:0.146px;">Desconexión de la acometida eléctrica.</span>
<span class="t nv" style="right:1049px;top:220px;">309,00</span>
<svg class="ic" style="left:42px;top:241px" width="16" height="12"><use href="#item"/></svg>
<span class="t nv" id="f23" style="left:65px;top:238px;letter-spacing:0.134px;">PD01</span>
<svg class="ic" style="left:303px;top:240px" width="16" height="13"><use href="#scg"/></svg>
<svg class="ic" style="left:350px;top:239px" width="16" height="16"><use href="#rco"/></svg>
<span class="t nv" style="left:376px;top:238px;">m³</span>
<span class="t nv" id="f24" style="left:412px;top:238px;letter-spacing:0.155px;">Excavación a cielo abierto, con medios manuales.</span>
<span class="t nv" style="right:1049px;top:238px;">38,46</span>
<svg class="ic" style="left:42px;top:259px" width="16" height="12"><use href="#item"/></svg>
<span class="t nv" id="f25" style="left:65px;top:256px;letter-spacing:0.205px;">PD02</span>
<svg class="ic" style="left:303px;top:258px" width="16" height="13"><use href="#scg"/></svg>
<svg class="ic" style="left:350px;top:257px" width="16" height="16"><use href="#rco"/></svg>
<span class="t nv" style="left:376px;top:256px;">m³</span>
<span class="t nv" id="f26" style="left:412px;top:256px;letter-spacing:0.121px;">Excavación de zanjas para instalaciones.</span>
<span class="t nv" style="right:1049px;top:256px;">58,40</span>
<svg class="ic" style="left:42px;top:277px" width="16" height="12"><use href="#item"/></svg>
<span class="t nv" id="f27" style="left:65px;top:274px;letter-spacing:0.205px;">PD03</span>
<svg class="ic" style="left:303px;top:276px" width="16" height="13"><use href="#scg"/></svg>
<svg class="ic" style="left:350px;top:275px" width="16" height="16"><use href="#rco"/></svg>
<span class="t nv" style="left:376px;top:274px;">m²</span>
<span class="t nv" id="f28" style="left:412px;top:274px;letter-spacing:0.109px;">Desbroce y limpieza del terreno.</span>
<span class="t nv" style="right:1049px;top:274px;">37,71</span>
<svg class="ic" style="left:42px;top:295px" width="16" height="12"><use href="#item"/></svg>
<span class="t nv" id="f29" style="left:65px;top:292px;letter-spacing:0.026px;">ADR010</span>
<span class="t b nv" style="left:262px;top:292px;letter-spacing:-0.7px;">ADE</span>
<svg class="ic" style="left:303px;top:294px" width="16" height="13"><use href="#sce"/></svg>
<svg class="ic" style="left:325px;top:293px" width="16" height="16"><use href="#hat"/></svg>
<svg class="ic" style="left:350px;top:293px" width="16" height="16"><use href="#rcg"/></svg>
<span class="t nv" style="left:376px;top:292px;">m³</span>
<span class="t nv" id="f30" style="left:412px;top:292px;letter-spacing:0.204px;">Relleno de zanjas para instalaciones.</span>
<span class="t nv" style="right:1106px;top:292px;">1,000</span>
<span class="t nv" style="right:1049px;top:292px;">25,11</span>
<span class="t nv" style="right:971px;top:292px;">25,11</span>
<svg class="ic" style="left:42px;top:313px" width="16" height="12"><use href="#item"/></svg>
<span class="t nv" id="f31" style="left:65px;top:310px;letter-spacing:-0.037px;">ANS010</span>
<svg class="ic" style="left:303px;top:312px" width="16" height="13"><use href="#sct"/></svg>
<svg class="ic" style="left:350px;top:311px" width="16" height="16"><use href="#rcg"/></svg>
<span class="t nv" style="left:376px;top:310px;">m²</span>
<span class="t nv" id="f32" style="left:412px;top:310px;letter-spacing:0.198px;">Solera de hormigón.</span>
<span class="t nv" style="right:1049px;top:310px;">18,21</span>
<svg class="ic" style="left:42px;top:331px" width="16" height="12"><use href="#item"/></svg>
<span class="t nv" id="f33" style="left:65px;top:328px;letter-spacing:0.058px;">ANS010b</span>
<svg class="ic" style="left:303px;top:330px" width="16" height="13"><use href="#sce"/></svg>
<svg class="ic" style="left:350px;top:329px" width="16" height="16"><use href="#rcg"/></svg>
<span class="t nv" style="left:376px;top:328px;">m²</span>
<span class="t nv" id="f34" style="left:412px;top:328px;letter-spacing:0.198px;">Solera de hormigón.</span>
<span class="t nv" style="right:1106px;top:328px;">1,000</span>
<span class="t nv" style="right:1049px;top:328px;">18,21</span>
<span class="t nv" style="right:971px;top:328px;">18,21</span>
<svg class="ic" style="left:42px;top:349px" width="16" height="12"><use href="#item"/></svg>
<span class="t nv" id="f35" style="left:65px;top:346px;letter-spacing:0.171px;">E02ERP010</span>
<svg class="ic" style="left:303px;top:348px" width="16" height="13"><use href="#scg"/></svg>
<svg class="ic" style="left:350px;top:347px" width="16" height="16"><use href="#rco"/></svg>
<span class="t nv" style="left:376px;top:346px;">m2</span>
<span class="t nv" id="f36" style="left:412px;top:346px;letter-spacing:-0.248px;">REFIN.MAN.ZANJA/POZO T.FLOJOS</span>
<span class="t nv" style="right:1049px;top:346px;">2,84</span>
<svg class="ic" style="left:42px;top:367px" width="16" height="12"><use href="#item"/></svg>
<span class="t nv" id="f37" style="left:65px;top:364px;letter-spacing:0.171px;">E02ERP020</span>
<svg class="ic" style="left:303px;top:366px" width="16" height="13"><use href="#scg"/></svg>
<svg class="ic" style="left:350px;top:365px" width="16" height="16"><use href="#rco"/></svg>
<span class="t nv" style="left:376px;top:364px;">m2</span>
<span class="t nv" id="f38" style="left:412px;top:364px;letter-spacing:-0.208px;">REFIN.MAN.ZANJA/POZO T.DUROS</span>
<span class="t nv" style="right:1049px;top:364px;">3,27</span>
<div style="left:63px;top:381px;width:890px;height:1px;background:#808080"></div>
<div style="left:63px;top:399px;width:890px;height:1px;background:#808080"></div>
<div style="left:33px;top:380px;width:30px;height:21px;border:1px solid #808080;background:#fff"></div>
<div style="left:35px;top:382px;width:26px;height:17px;border:1px solid #808080;background:#fff"></div>
<svg class="ic" style="left:42px;top:385px" width="16" height="12"><use href="#newitem"/></svg>
<svg class="ic" style="left:34px;top:403px" width="15" height="11"><use href="#newfolder"/></svg>
<svg class="ic" style="left:26px;top:421px" width="15" height="11"><use href="#newfolder"/></svg>
<div class="vl" style="left:15px;top:166px;width:1px;height:262px;"></div>
<div class="vl" style="left:23px;top:202px;width:1px;height:208px;"></div>
<div class="vl" style="left:31px;top:220px;width:1px;height:172px;"></div>
<div class="hlin" style="left:15px;top:175px;width:4px;height:1px;"></div>
<div class="hlin" style="left:15px;top:193px;width:4px;height:1px;"></div>
<div class="hlin" style="left:15px;top:427px;width:4px;height:1px;"></div>
<div class="hlin" style="left:23px;top:211px;width:4px;height:1px;"></div>
<div class="hlin" style="left:23px;top:409px;width:4px;height:1px;"></div>
<div class="hlin" style="left:31px;top:229px;width:4px;height:1px;"></div>
<div class="hlin" style="left:31px;top:247px;width:4px;height:1px;"></div>
<div class="hlin" style="left:31px;top:265px;width:4px;height:1px;"></div>
<div class="hlin" style="left:31px;top:283px;width:4px;height:1px;"></div>
<div class="hlin" style="left:31px;top:301px;width:4px;height:1px;"></div>
<div class="hlin" style="left:31px;top:319px;width:4px;height:1px;"></div>
<div class="hlin" style="left:31px;top:337px;width:4px;height:1px;"></div>
<div class="hlin" style="left:31px;top:355px;width:4px;height:1px;"></div>
<div class="hlin" style="left:31px;top:373px;width:4px;height:1px;"></div>
<div class="hlin" style="left:31px;top:391px;width:2px;height:1px;"></div>
<div style="left:967px;top:128px;width:927px;height:431px;background:#fff"></div>
<div style="left:1894px;top:128px;width:16px;height:431px;background:#f0f0f0"></div>
<div style="left:1901px;top:182px;width:2px;height:139px;background:#7c7c7c;box-shadow:0 0 0 1px #f8f8f8"></div>
<div class="hr" style="left:967px;top:128px;width:926px;height:18px;"></div>
<div style="left:967px;top:146px;width:926px;height:1px;background:#7a4a10"></div>
<div style="left:967px;top:147px;width:926px;height:1px;background:#000"></div>
<div class="sepr" style="left:1041px;top:129px;width:1px;height:17px;"></div>
<div class="sepr" style="left:1119px;top:129px;width:1px;height:17px;"></div>
<div class="sepr" style="left:1160px;top:129px;width:1px;height:17px;"></div>
<div class="sepr" style="left:1182px;top:129px;width:1px;height:17px;"></div>
<div class="sepr" style="left:1211px;top:129px;width:1px;height:17px;"></div>
<div class="sepr" style="left:1243px;top:129px;width:1px;height:17px;"></div>
<div class="sepr" style="left:1693px;top:129px;width:1px;height:17px;"></div>
<div class="sepr" style="left:1757px;top:129px;width:1px;height:17px;"></div>
<div class="sepr" style="left:1821px;top:129px;width:1px;height:17px;"></div>
<div class="sepr" style="left:1891px;top:129px;width:1px;height:17px;"></div>
<span class="t" style="left:1045px;top:129px;letter-spacing:.2px;">Código</span>
<span class="t" style="left:1123px;top:129px;letter-spacing:.2px;">Doc.</span>
<span class="t" style="left:1164px;top:129px;letter-spacing:.2px;">Pli</span>
<span class="t" style="left:1186px;top:129px;letter-spacing:.2px;">GR</span>
<span class="t" style="left:1215px;top:129px;letter-spacing:.2px;">Ud</span>
<span class="t" style="left:1247px;top:129px;letter-spacing:.2px;">Resumen</span>
<span class="t" style="right:166px;top:129px;letter-spacing:.2px;margin-right:-.2px;">Cant</span>
<span class="t" style="right:102px;top:129px;letter-spacing:.2px;margin-right:-.2px;">Precio</span>
<span class="t" style="right:31px;top:129px;letter-spacing:.2px;margin-right:-.2px;">Importe</span>
<div style="left:967px;top:148px;width:926px;height:411px;overflow:hidden">
<div style="left:77px;top:287px;width:849px;height:1px;background:#000"></div>
<div style="left:77px;top:305px;width:849px;height:1px;background:#000"></div>
<div style="left:47px;top:286px;width:30px;height:21px;border:1px solid #000;background:#8a8a8a"></div>
<div style="left:49px;top:288px;width:26px;height:17px;border:1px solid #000;background:#fff"></div>
<svg class="ic" style="left:24px;top:3px" width="16" height="12"><use href="#fplus"/></svg>
<span class="t" id="f39" style="left:47px;top:0px;letter-spacing:-0.144px;">E01</span>
<svg class="ic" style="left:166px;top:2px" width="16" height="13"><use href="#scg"/></svg>
<span class="t" id="f40" style="left:249px;top:0px;letter-spacing:-0.231px;">ACTUACIONES PREVIAS</span>
<svg class="ic" style="left:24px;top:21px" width="16" height="12"><use href="#fminus"/></svg>
<span class="t" id="f41" style="left:47px;top:18px;letter-spacing:0.156px;">E02</span>
<svg class="ic" style="left:166px;top:20px" width="16" height="13"><use href="#scg"/></svg>
<span class="t" id="f42" style="left:249px;top:18px;letter-spacing:-0.256px;">MOVIMIENTOS DE TIERRA</span>
<svg class="ic" style="left:32px;top:39px" width="16" height="12"><use href="#fminus"/></svg>
<span class="t" id="f43" style="left:55px;top:36px;letter-spacing:0.112px;">E02E</span>
<svg class="ic" style="left:174px;top:38px" width="16" height="13"><use href="#scg"/></svg>
<span class="t" id="f44" style="left:257px;top:36px;letter-spacing:-0.128px;">EDIFICACIÓN</span>
<svg class="ic" style="left:40px;top:57px" width="16" height="12"><use href="#fplus"/></svg>
<span class="t" id="f45" style="left:63px;top:54px;letter-spacing:-0.08px;">E02EA</span>
<span class="t b" style="left:141px;top:54px;letter-spacing:-0.7px;">ADL</span>
<svg class="ic" style="left:182px;top:56px" width="16" height="13"><use href="#scg"/></svg>
<span class="t" id="f46" style="left:265px;top:54px;letter-spacing:-0.209px;">LIMPIEZA Y DESBROCE</span>
<svg class="ic" style="left:40px;top:75px" width="16" height="12"><use href="#fplus"/></svg>
<span class="t" id="f47" style="left:63px;top:72px;letter-spacing:0.16px;">E02EC</span>
<span class="t b" style="left:141px;top:72px;letter-spacing:-0.7px;">ADD</span>
<svg class="ic" style="left:182px;top:74px" width="16" height="13"><use href="#scg"/></svg>
<span class="t" id="f48" style="left:265px;top:72px;letter-spacing:-0.119px;">DESMONTES</span>
<svg class="ic" style="left:40px;top:93px" width="16" height="12"><use href="#fplus"/></svg>
<span class="t" id="f49" style="left:63px;top:90px;letter-spacing:0.049px;">E02ED</span>
<span class="t b" style="left:141px;top:90px;letter-spacing:-0.7px;">ADE</span>
<svg class="ic" style="left:182px;top:92px" width="16" height="13"><use href="#scg"/></svg>
<span class="t" id="f50" style="left:265px;top:90px;letter-spacing:-0.417px;">VACIADOS</span>
<svg class="ic" style="left:40px;top:111px" width="16" height="12"><use href="#fplus"/></svg>
<span class="t" id="f51" style="left:63px;top:108px;letter-spacing:0.069px;">E02EZ</span>
<span class="t b" style="left:141px;top:108px;letter-spacing:-0.7px;">ADE</span>
<svg class="ic" style="left:182px;top:110px" width="16" height="13"><use href="#scg"/></svg>
<span class="t" id="f52" style="left:265px;top:108px;letter-spacing:-0.333px;">EXCAVACIÓN EN ZANJAS</span>
<svg class="ic" style="left:40px;top:129px" width="16" height="12"><use href="#fplus"/></svg>
<span class="t" id="f53" style="left:63px;top:126px;letter-spacing:0.031px;">E02EP</span>
<span class="t b" style="left:141px;top:126px;letter-spacing:-0.7px;">ADE</span>
<svg class="ic" style="left:182px;top:128px" width="16" height="13"><use href="#scg"/></svg>
<span class="t" id="f54" style="left:265px;top:126px;letter-spacing:-0.257px;">EXCAVACIONES EN POZOS</span>
<svg class="ic" style="left:40px;top:147px" width="16" height="12"><use href="#fplus"/></svg>
<span class="t" id="f55" style="left:63px;top:144px;letter-spacing:0.031px;">E02EB</span>
<span class="t b" style="left:141px;top:144px;letter-spacing:-0.7px;">ADE</span>
<svg class="ic" style="left:182px;top:146px" width="16" height="13"><use href="#scg"/></svg>
<span class="t" id="f56" style="left:265px;top:144px;letter-spacing:-0.239px;">EN BATACHES Y EN MINA</span>
<svg class="ic" style="left:40px;top:165px" width="16" height="12"><use href="#fminus"/></svg>
<span class="t" id="f57" style="left:63px;top:162px;letter-spacing:0.16px;">E02ER</span>
<svg class="ic" style="left:182px;top:164px" width="16" height="13"><use href="#scg"/></svg>
<span class="t" id="f58" style="left:265px;top:162px;letter-spacing:-0.159px;">PERFILADOS Y REFINOS</span>
<svg class="ic" style="left:48px;top:183px" width="16" height="12"><use href="#fminus"/></svg>
<span class="t" id="f59" style="left:71px;top:180px;letter-spacing:0.04px;">E02ERP</span>
<svg class="ic" style="left:190px;top:182px" width="16" height="13"><use href="#scg"/></svg>
<span class="t" id="f60" style="left:273px;top:180px;letter-spacing:-0.289px;">EN ZANJAS Y POZOS</span>
<svg class="ic" style="left:56px;top:201px" width="16" height="12"><use href="#item"/></svg>
<span class="t nv" id="f61" style="left:79px;top:198px;letter-spacing:0.171px;">E02ERP010</span>
<svg class="ic" style="left:198px;top:200px" width="16" height="13"><use href="#scg"/></svg>
<span class="t nv" style="left:249px;top:198px;">m2</span>
<span class="t nv" id="f62" style="left:281px;top:198px;letter-spacing:-0.239px;">REFIN.MAN.ZANJA/POZO T.FLOJOS</span>
<span class="t nv" style="right:75px;top:198px">2,76</span>
<svg class="ic" style="left:56px;top:219px" width="16" height="12"><use href="#item"/></svg>
<span class="t nv" id="f63" style="left:79px;top:216px;letter-spacing:0.171px;">E02ERP020</span>
<svg class="ic" style="left:198px;top:218px" width="16" height="13"><use href="#scg"/></svg>
<span class="t nv" style="left:249px;top:216px;">m2</span>
<span class="t nv" id="f64" style="left:281px;top:216px;letter-spacing:-0.199px;">REFIN.MAN.ZANJA/POZO T.DUROS</span>
<span class="t nv" style="right:75px;top:216px">3,17</span>
<svg class="ic" style="left:48px;top:237px" width="16" height="12"><use href="#fplus"/></svg>
<span class="t" id="f65" style="left:71px;top:234px;letter-spacing:-0.011px;">E02ERV</span>
<svg class="ic" style="left:190px;top:236px" width="16" height="13"><use href="#scg"/></svg>
<span class="t" id="f66" style="left:273px;top:234px;letter-spacing:-0.347px;">EN VACIADOS</span>
<svg class="ic" style="left:48px;top:255px" width="16" height="12"><use href="#fminus"/></svg>
<span class="t" id="f67" style="left:71px;top:252px;letter-spacing:0.065px;">E02ERW</span>
<span class="t b" style="left:149px;top:252px;letter-spacing:-0.7px;">ADD</span>
<svg class="ic" style="left:190px;top:254px" width="16" height="13"><use href="#scg"/></svg>
<span class="t" id="f68" style="left:273px;top:252px;letter-spacing:-0.494px;">VARIOS</span>
<svg class="ic" style="left:56px;top:273px" width="16" height="12"><use href="#item"/></svg>
<span class="t nv" id="f69" style="left:79px;top:270px;letter-spacing:0.129px;">E02ERW010</span>
<span class="t gy" style="left:157px;top:270px;letter-spacing:-0.6px;">ADD</span>
<svg class="ic" style="left:198px;top:272px" width="16" height="13"><use href="#scg"/></svg>
<span class="t nv" style="left:249px;top:270px;">m2</span>
<span class="t nv" id="f70" style="left:281px;top:270px;letter-spacing:-0.264px;">EXPLAN/REF/NIV.TERRENO A MANO</span>
<span class="t nv" style="right:75px;top:270px">2,05</span>
<svg class="ic" style="left:56px;top:291px" width="16" height="12"><use href="#item"/></svg>
<span class="t nv" id="f71" style="left:79px;top:288px;letter-spacing:0.129px;">E02ERW020</span>
<span class="t gy" style="left:157px;top:288px;letter-spacing:-0.6px;">ADD</span>
<svg class="ic" style="left:198px;top:290px" width="16" height="13"><use href="#scg"/></svg>
<span class="t nv" style="left:249px;top:288px;">m2</span>
<span class="t nv" id="f72" style="left:281px;top:288px;letter-spacing:-0.297px;">EXPLAN/REF/NIV.TERRENO A MÁQ.</span>
<span class="t nv" style="right:75px;top:288px">0,24</span>
<svg class="ic" style="left:40px;top:309px" width="16" height="12"><use href="#fplus"/></svg>
<span class="t" id="f73" style="left:63px;top:306px;letter-spacing:0.031px;">E02ES</span>
<svg class="ic" style="left:182px;top:308px" width="16" height="13"><use href="#scg"/></svg>
<span class="t" id="f74" style="left:265px;top:306px;letter-spacing:-0.114px;">TERRAPLENES, RELLENOS Y COMPACT.</span>
<svg class="ic" style="left:40px;top:327px" width="16" height="12"><use href="#fplus"/></svg>
<span class="t" id="f75" style="left:63px;top:324px;letter-spacing:0.049px;">E02EU</span>
<svg class="ic" style="left:182px;top:326px" width="16" height="13"><use href="#scg"/></svg>
<span class="t" id="f76" style="left:265px;top:324px;letter-spacing:-0.274px;">APUNTALAMIENTO Y ENTIBACIÓN</span>
<svg class="ic" style="left:40px;top:345px" width="16" height="12"><use href="#fplus"/></svg>
<span class="t" id="f77" style="left:63px;top:342px;letter-spacing:0.014px;">E02ET</span>
<span class="t b" style="left:141px;top:342px;letter-spacing:-0.7px;">ADT</span>
<svg class="ic" style="left:182px;top:344px" width="16" height="13"><use href="#scg"/></svg>
<span class="t" id="f78" style="left:265px;top:342px;letter-spacing:-0.205px;">CARGAS Y TRANSPORTES</span>
<svg class="ic" style="left:32px;top:363px" width="16" height="12"><use href="#fplus"/></svg>
<span class="t" id="f79" style="left:55px;top:360px;letter-spacing:0.134px;">E02C</span>
<svg class="ic" style="left:174px;top:362px" width="16" height="13"><use href="#scg"/></svg>
<span class="t" id="f80" style="left:257px;top:360px;letter-spacing:-0.337px;">OBRA CIVIL</span>
<svg class="ic" style="left:24px;top:381px" width="16" height="12"><use href="#fplus"/></svg>
<span class="t" id="f81" style="left:47px;top:378px;letter-spacing:0.056px;">E03</span>
<svg class="ic" style="left:166px;top:380px" width="16" height="13"><use href="#scg"/></svg>
<span class="t" id="f82" style="left:249px;top:378px;letter-spacing:-0.175px;">RED DE SANEAMIENTO</span>
<svg class="ic" style="left:24px;top:399px" width="16" height="12"><use href="#fplus"/></svg>
<span class="t" id="f83" style="left:47px;top:396px;letter-spacing:0.056px;">E04</span>
<svg class="ic" style="left:166px;top:398px" width="16" height="13"><use href="#scg"/></svg>
<span class="t" id="f84" style="left:249px;top:396px;letter-spacing:-0.21px;">CIMENTACIONES</span>
<div class="vl" style="left:13px;top:0px;width:1px;height:413px;"></div>
<div class="vl" style="left:21px;top:36px;width:1px;height:334px;"></div>
<div class="vl" style="left:29px;top:54px;width:1px;height:298px;"></div>
<div class="vl" style="left:37px;top:180px;width:1px;height:82px;"></div>
<div class="vl" style="left:45px;top:198px;width:1px;height:28px;"></div>
<div class="vl" style="left:45px;top:270px;width:1px;height:28px;"></div>
<div class="hlin" style="left:13px;top:9px;width:4px;height:1px;"></div>
<div class="hlin" style="left:13px;top:27px;width:4px;height:1px;"></div>
<div class="hlin" style="left:21px;top:45px;width:4px;height:1px;"></div>
<div class="hlin" style="left:29px;top:63px;width:4px;height:1px;"></div>
<div class="hlin" style="left:29px;top:81px;width:4px;height:1px;"></div>
<div class="hlin" style="left:29px;top:99px;width:4px;height:1px;"></div>
<div class="hlin" style="left:29px;top:117px;width:4px;height:1px;"></div>
<div class="hlin" style="left:29px;top:135px;width:4px;height:1px;"></div>
<div class="hlin" style="left:29px;top:153px;width:4px;height:1px;"></div>
<div class="hlin" style="left:29px;top:171px;width:4px;height:1px;"></div>
<div class="hlin" style="left:37px;top:189px;width:4px;height:1px;"></div>
<div class="hlin" style="left:45px;top:207px;width:4px;height:1px;"></div>
<div class="hlin" style="left:45px;top:225px;width:4px;height:1px;"></div>
<div class="hlin" style="left:37px;top:243px;width:4px;height:1px;"></div>
<div class="hlin" style="left:37px;top:261px;width:4px;height:1px;"></div>
<div class="hlin" style="left:45px;top:279px;width:4px;height:1px;"></div>
<div class="hlin" style="left:45px;top:297px;width:2px;height:1px;"></div>
<div class="hlin" style="left:29px;top:315px;width:4px;height:1px;"></div>
<div class="hlin" style="left:29px;top:333px;width:4px;height:1px;"></div>
<div class="hlin" style="left:29px;top:351px;width:4px;height:1px;"></div>
<div class="hlin" style="left:21px;top:369px;width:4px;height:1px;"></div>
<div class="hlin" style="left:13px;top:387px;width:4px;height:1px;"></div>
<div class="hlin" style="left:13px;top:405px;width:4px;height:1px;"></div>
</div>
<div style="left:6px;top:562px;width:951px;height:1px;background:#000"></div>
<div style="left:6px;top:563px;width:951px;height:1px;background:#d4d4d4"></div>
<div style="left:6px;top:564px;width:951px;height:1px;background:#6e6e6e"></div>
<div style="left:6px;top:565px;width:951px;height:1px;background:#000"></div>
<div style="left:963px;top:562px;width:951px;height:1px;background:#000"></div>
<div style="left:963px;top:563px;width:951px;height:1px;background:#d4d4d4"></div>
<div style="left:963px;top:564px;width:951px;height:1px;background:#6e6e6e"></div>
<div style="left:963px;top:565px;width:951px;height:1px;background:#000"></div>
<div style="left:6px;top:566px;width:951px;height:436px;background:#f0f0f0"></div>
<div style="left:6px;top:566px;width:1px;height:436px;background:#fafafa"></div>
<div style="left:963px;top:566px;width:951px;height:436px;background:#f0f0f0"></div>
<div style="left:963px;top:566px;width:1px;height:436px;background:#fafafa"></div>
<div style="left:966px;top:568px;width:30px;height:23px;background:#f8f8f8;border-radius:2px 2px 0 0"></div>
<div style="left:996px;top:570px;width:27px;height:21px;border:1px solid #f8f8f8;border-left:0"></div>
<div style="left:1022px;top:570px;width:27px;height:21px;border:1px solid #f8f8f8"></div>
<span class="t" style="left:974px;top:569px;font-family:'Liberation Serif',serif;font-style:italic;font-size:15px;line-height:18px">A</span>
<div style="left:974px;top:585px;width:11px;height:1px;background:#000"></div>
<svg class="ic" style="left:999px;top:572px" width="17" height="17" viewBox="0 0 17 17"><path d="M.8 12 V2.4 Q.8 .8 2.4 .8 H12" fill="none" stroke="#000" stroke-width="1.5"/><rect x="3" y="3" width="13" height="13" rx="1.6" fill="#000"/><path d="M4.6 14 L8.2 9.4 L10.4 11.8 L12 10.4 L14.6 14Z" fill="#fff"/><circle cx="12.6" cy="6.2" r="1.3" fill="#fff"/></svg>
<svg class="ic" style="left:1030px;top:572px" width="10" height="17" viewBox="0 0 10 17"><path d="M8.2 4.6 V12 Q8.2 15.6 4.8 15.6 Q1.4 15.6 1.4 12 V4 Q1.4 1 4.6 1 Q7 1 7 4 V11.4 Q7 13.2 4.8 13.2 Q3.4 13.2 3.4 11.4 V5" fill="none" stroke="#000" stroke-width="1.3"/></svg>
<div style="left:969px;top:590px;width:939px;height:404px;border:1px solid #f8f8f8"></div>
<svg class="ic" style="left:973px;top:599px" width="14" height="11" viewBox="0 0 14 11"><rect x="1" y="1" width="12" height="9" rx="1.4" fill="none" stroke="#000" stroke-width="1.8"/><rect x="3.4" y="4.6" width="7.2" height="1.8" fill="#000"/></svg>
<span class="t b" id="f85" style="left:994px;top:595px;letter-spacing:-0.082px;">Resumen</span>
<div style="left:970px;top:617px;width:935px;height:21px;border:1px solid #fafafa"></div>
<span class="t" id="f86" style="left:975px;top:618px;color:#7c7c7c;letter-spacing:-0.297px;">EXPLAN/REF/NIV.TERRENO A MÁQ.</span>
<svg class="ic" style="left:973px;top:652px" width="14" height="14" viewBox="0 0 14 14"><rect x="1" y="1" width="12" height="12" rx="1.6" fill="none" stroke="#000" stroke-width="1.8"/><path d="M3.6 4.6 H10.4 M3.6 7 H10.4 M3.6 9.4 H8" stroke="#000" stroke-width="1.4"/></svg>
<span class="t b" id="f87" style="left:994px;top:650px;letter-spacing:-0.091px;">Descripción</span>
<div style="left:970px;top:672px;width:694px;height:319px;border:1px solid #fafafa"></div>
<div style="left:1646px;top:673px;width:1px;height:317px;background:#fafafa"></div>
<span class="t" id="f88" style="left:975px;top:673px;color:#7c7c7c;letter-spacing:0.184px;">Explanación, refino y nivelación de terrenos, por medios mecánicos, en terrenos limpiados superficialmente con</span>
<span class="t" id="f89" style="left:975px;top:688px;color:#7c7c7c;letter-spacing:0.21px;">máquinas, con p.p. de medios auxiliares.</span>
<svg class="ic" style="left:1676px;top:650px" width="16" height="17" viewBox="0 0 16 17"><path d="M8 4 H3 Q1.4 4 1.4 5.6 V14.4 L3.6 13 H11.4 Q13 13 13 11.4 V8" fill="none" stroke="#000" stroke-width="1.7"/><path d="M4 8 H10 M4 10.6 H8" stroke="#000" stroke-width="1.5"/><path d="M9 7 L9.6 4.6 L13.2 1 L15 2.8 L11.4 6.4Z" fill="#000"/></svg>
<span class="t b" id="f90" style="left:1698px;top:650px;letter-spacing:-0.076px;">Notas</span>
<div style="left:1674px;top:672px;width:231px;height:319px;border:1px solid #fafafa"></div>
<div style="left:1887px;top:673px;width:1px;height:317px;background:#fafafa"></div>
<svg class="ic" style="left:1651px;top:679px" width="9" height="6" viewBox="0 0 9 6"><path d="M4.5 0 L9 5 Q9 6 8 6 H1 Q0 6 0 5Z" fill="#a3a3a3"/></svg>
<svg class="ic" style="left:1651px;top:979px" width="9" height="6" viewBox="0 0 9 6"><path d="M4.5 6 L9 1 Q9 0 8 0 H1 Q0 0 0 1Z" fill="#a3a3a3"/></svg>
<svg class="ic" style="left:1892px;top:679px" width="9" height="6" viewBox="0 0 9 6"><path d="M4.5 0 L9 5 Q9 6 8 6 H1 Q0 6 0 5Z" fill="#a3a3a3"/></svg>
<svg class="ic" style="left:1892px;top:979px" width="9" height="6" viewBox="0 0 9 6"><path d="M4.5 6 L9 1 Q9 0 8 0 H1 Q0 0 0 1Z" fill="#a3a3a3"/></svg>
<div style="left:1668px;top:811px;width:1px;height:1px;background:#9a9a9a"></div>
<div style="left:1668px;top:814px;width:1px;height:1px;background:#9a9a9a"></div>
<div style="left:1668px;top:817px;width:1px;height:1px;background:#9a9a9a"></div>
<div style="left:1668px;top:820px;width:1px;height:1px;background:#9a9a9a"></div>
<div style="left:1668px;top:823px;width:1px;height:1px;background:#9a9a9a"></div>
<span class="t" id="f91" style="left:0px;top:1011px;color:#fff;letter-spacing:0.15px;">Eliminado concepto no usado 'M08NM020'</span>
<div style="left:585px;top:28px;width:177px;height:52px;border:3px solid #c8202e;border-radius:2px"></div></body></html>
